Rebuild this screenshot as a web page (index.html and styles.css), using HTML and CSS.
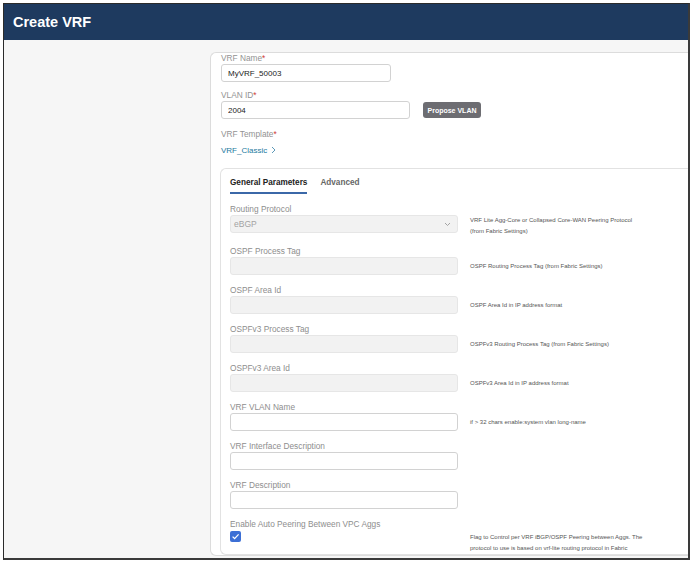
FILE: index.html
```html
<!DOCTYPE html>
<html lang="en">
<head>
<meta charset="utf-8">
<title>Create VRF</title>
<link rel="stylesheet" href="styles.css">
</head>
<body>
<div class="frame">
  <header class="topbar">Create VRF</header>
  <main class="content">
    <section class="card">
      <div class="top-field">
        <div class="lbl">VRF Name<span class="req">*</span></div>
        <input class="txt name" type="text" value="MyVRF_50003">
      </div>
      <div class="top-field gap">
        <div class="lbl">VLAN ID<span class="req">*</span></div>
        <div class="vlan-row">
          <input class="txt vlan" type="text" value="2004">
          <button class="propose" type="button">Propose VLAN</button>
        </div>
      </div>
      <div class="top-field gap2">
        <div class="lbl">VRF Template<span class="req">*</span></div>
        <a class="tpl-link" href="#">VRF_Classic<svg class="chev-r" width="5" height="8" viewBox="0 0 5 8"><path d="M1 1 L4 4 L1 7" fill="none" stroke="#4a8db0" stroke-width="0.9"/></svg></a>
      </div>

      <section class="inner">
        <nav class="tabs">
          <span class="tab active">General Parameters</span>
          <span class="tab">Advanced</span>
        </nav>
        <div class="fields">
          <div class="field">
            <div class="flbl">Routing Protocol</div>
            <div class="select"><span>eBGP</span><svg width="7" height="5" viewBox="0 0 7 5"><path d="M1 1 L3.5 3.5 L6 1" fill="none" stroke="#9a9a9a" stroke-width="0.9"/></svg></div>
            <div class="help two">VRF Lite Agg-Core or Collapsed Core-WAN Peering Protocol (from Fabric Settings)</div>
          </div>
          <div class="field">
            <div class="flbl">OSPF Process Tag</div>
            <div class="box disabled"></div>
            <div class="help">OSPF Routing Process Tag (from Fabric Settings)</div>
          </div>
          <div class="field">
            <div class="flbl">OSPF Area Id</div>
            <div class="box disabled"></div>
            <div class="help">OSPF Area Id in IP address format</div>
          </div>
          <div class="field">
            <div class="flbl">OSPFv3 Process Tag</div>
            <div class="box disabled"></div>
            <div class="help">OSPFv3 Routing Process Tag (from Fabric Settings)</div>
          </div>
          <div class="field">
            <div class="flbl">OSPFv3 Area Id</div>
            <div class="box disabled"></div>
            <div class="help">OSPFv3 Area Id in IP address format</div>
          </div>
          <div class="field">
            <div class="flbl">VRF VLAN Name</div>
            <div class="box"></div>
            <div class="help">if &gt; 32 chars enable:system vlan long-name</div>
          </div>
          <div class="field">
            <div class="flbl">VRF Interface Description</div>
            <div class="box"></div>
          </div>
          <div class="field">
            <div class="flbl">VRF Description</div>
            <div class="box"></div>
          </div>
          <div class="field">
            <div class="flbl">Enable Auto Peering Between VPC Aggs</div>
            <span class="check"><svg width="11" height="11" viewBox="0 0 11 11"><path d="M2.6 5.6 L4.6 7.6 L8.6 3.4" fill="none" stroke="#fff" stroke-width="1.3"/></svg></span>
            <div class="help top">Flag to Control per VRF iBGP/OSPF Peering between Aggs. The protocol to use is based on vrf-lite routing protocol in Fabric</div>
          </div>
        </div>
      </section>
    </section>
  </main>
</div>
</body>
</html>
```
FILE: styles.css
```css
* { box-sizing: border-box; }

body {
  margin: 0;
  background: #ffffff;
  font-family: "Liberation Sans", Arial, sans-serif;
}

.frame {
  margin: 3px 0 0 3px;
  width: 687px;
  height: 557px;
  border-left: 1px solid #2b2b2b;
  border-top: 1px solid #2b2b2b;
  border-right: 2px solid #3a3a3a;
  border-bottom: 2px solid #3a3a3a;
  background: #f6f6f6;
  overflow: hidden;
  display: flex;
  flex-direction: column;
}

.topbar {
  flex-shrink: 0;
  height: 36px;
  background: #1e3a5f;
  color: #ffffff;
  font-weight: bold;
  font-size: 14.5px;
  padding-left: 9px;
  display: flex;
  align-items: center;
}

.content {
  flex: 1;
  min-height: 0;
  padding: 12px 0 0 206px;
  display: flex;
  flex-direction: column;
}

.card {
  flex: 1;
  background: #ffffff;
  border: 1px solid #dcdcdc;
  border-right: none;
  border-radius: 6px 0 0 6px;
  padding: 0 0 0 10px;
  margin-bottom: 2px;
  display: flex;
  flex-direction: column;
}

.lbl {
  font-size: 8.3px;
  line-height: 10px;
  color: #929292;
  margin-bottom: 1px;
}

.req { color: #cf3d35; }

.top-field.gap { margin-top: 8px; }
.top-field.gap2 { margin-top: 10px; }

.txt {
  display: block;
  height: 18px;
  border: 1px solid #d2d2d2;
  border-radius: 3px;
  padding: 0 6px;
  font-family: "Liberation Sans", Arial, sans-serif;
  font-size: 8px;
  color: #222222;
  background: #ffffff;
  outline: none;
}

.txt.name { width: 170px; }
.txt.vlan { width: 189px; }

.vlan-row {
  display: flex;
  align-items: center;
}

.propose {
  margin-left: 13px;
  width: 58px;
  height: 16px;
  padding: 0;
  border: none;
  border-radius: 3px;
  background: #6d6d72;
  color: #ffffff;
  font-family: "Liberation Sans", Arial, sans-serif;
  font-weight: bold;
  font-size: 7px;
}

.tpl-link {
  display: flex;
  align-items: center;
  margin-top: 5px;
  height: 12px;
  font-size: 8px;
  color: #2379a0;
  text-decoration: none;
}

.chev-r { margin-left: 4px; }

.inner {
  flex: 1;
  margin: 12px 0 0 -1px;
  border: 1px solid #e2e2e2;
  border-right: none;
  border-radius: 6px 0 0 6px;
  padding: 0 0 0 9px;
}

.tabs {
  display: flex;
  gap: 13px;
  padding-top: 9px;
}

.tab {
  font-size: 8.2px;
  line-height: 10px;
  font-weight: bold;
  color: #666666;
  padding-bottom: 4px;
  border-bottom: 2px solid transparent;
}

.tab.active {
  color: #222222;
  border-bottom-color: #3b68a8;
}

.fields { margin-top: 10px; }

.field {
  display: grid;
  grid-template-columns: 228px 174px;
  column-gap: 12px;
  margin-bottom: 10px;
}

.field:last-child { margin-bottom: 0; }

.flbl {
  grid-column: 1;
  grid-row: 1;
  font-size: 8.3px;
  line-height: 11px;
  height: 11px;
  color: #8e8e8e;
}

.box, .select, .check {
  grid-column: 1;
  grid-row: 2;
  align-self: start;
}

.box {
  height: 18px;
  border: 1px solid #d2d2d2;
  border-radius: 3px;
  background: #ffffff;
}

.box.disabled {
  background: #f2f2f2;
  border-color: #e6e6e6;
}

.select {
  height: 18px;
  border: 1px solid #e6e6e6;
  border-radius: 3px;
  background: #f2f2f2;
  display: flex;
  align-items: center;
  justify-content: space-between;
  padding: 0 6px 0 3px;
  font-size: 8.5px;
  color: #a3a3a3;
}

.check {
  width: 11px;
  height: 11px;
  margin-top: 1px;
  border-radius: 2px;
  background: #3c6fd5;
  display: flex;
}

.help {
  grid-column: 2;
  grid-row: 2;
  align-self: center;
  font-size: 6px;
  line-height: 11px;
  color: #555555;
}

.help.two { line-height: 10.5px; }

.help.top {
  align-self: start;
  padding-top: 1.5px;
}
```
